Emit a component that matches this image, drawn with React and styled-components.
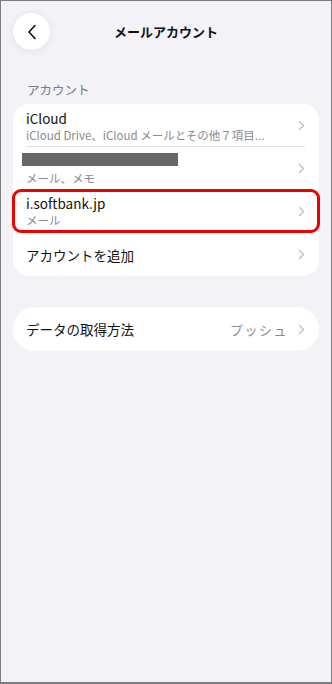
import React from "react";
import styled, { createGlobalStyle } from "styled-components";

const Global = createGlobalStyle`
  html, body { margin: 0; padding: 0; }
  body { font-family: "Noto Sans CJK JP", "Noto Sans", sans-serif; }
`;

const Frame = styled.div`
  box-sizing: border-box;
  width: 332px;
  height: 684px;
  background: #f2f2f7;
  border: 1px solid #7d7d7d;
  border-bottom-width: 2px;
  display: flex;
  flex-direction: column;
  padding: 12px 12px 0;
`;

const Header = styled.div`
  display: grid;
  grid-template-columns: 37px 1fr 37px;
  align-items: center;
  height: 37px;
`;

const BackButton = styled.div`
  width: 37px;
  height: 37px;
  border-radius: 50%;
  background: #ffffff;
  box-shadow: 0 1px 8px rgba(0, 0, 0, 0.08);
  display: flex;
  align-items: center;
  justify-content: center;
`;

const Title = styled.div`
  text-align: center;
  font-size: 13px;
  font-weight: 700;
  color: #111;
`;

const SectionLabel = styled.div`
  margin: 31px 0 0 14px;
  font-size: 12.5px;
  color: #7b7b80;
  height: 18px;
  line-height: 18px;
`;

const Card = styled.div`
  margin-top: ${(p) => p.$mt}px;
  background: #fff;
  border-radius: ${(p) => p.$radius}px;
  display: flex;
  flex-direction: column;
`;

const Row = styled.div`
  position: relative;
  display: flex;
  align-items: center;
  height: ${(p) => p.$h}px;
  padding: 0 14px 0 13px;
  ${(p) =>
    p.$divider &&
    `&::before { content: ""; position: absolute; left: 13px; right: 14px; bottom: 0; height: 1px; background: #e2e2e6; }`}
  ${(p) =>
    p.$highlight &&
    `&::after { content: ""; position: absolute; left: -1px; right: -1px; top: 0; bottom: 0; border: 3px solid #ee0000; border-radius: 9px; }`}
`;

const Texts = styled.div`
  flex: 1;
  display: flex;
  flex-direction: column;
  min-width: 0;
`;

const Primary = styled.div`
  font-size: 13.5px;
  color: #111;
  line-height: 18px;
`;

const Secondary = styled.div`
  font-size: 11.5px;
  color: #8a8a8e;
  line-height: 16px;
  white-space: nowrap;
`;

const Redacted = styled.div`
  width: 156px;
  height: 13px;
  background: #676767;
  margin: 2px 0 4px -4px;
`;

const Value = styled.div`
  font-size: 13px;
  color: #8a8a8e;
  margin-right: 10px;
  letter-spacing: 1.5px;
`;

const Chevron = () => (
  <svg width="7" height="11" viewBox="0 0 7 11">
    <path d="M1.5 1.5l4 4-4 4" fill="none" stroke="#c4c4c8" strokeWidth="1.5" strokeLinecap="round" strokeLinejoin="round" />
  </svg>
);

export default function App() {
  return (
    <>
      <Global />
      <Frame>
        <Header>
          <BackButton>
            <svg width="10" height="16" viewBox="0 0 10 16">
              <path d="M8 1.5L2 8l6 6.5" fill="none" stroke="#111" strokeWidth="1.6" strokeLinecap="round" strokeLinejoin="round" />
            </svg>
          </BackButton>
          <Title>メールアカウント</Title>
          <div />
        </Header>
        <SectionLabel>アカウント</SectionLabel>
        <Card $mt={5} $radius={16}>
          <Row $h={43} $divider>
            <Texts>
              <Primary>iCloud</Primary>
              <Secondary>iCloud Drive、iCloud メールとその他７項目...</Secondary>
            </Texts>
            <Chevron />
          </Row>
          <Row $h={42}>
            <Texts>
              <Redacted />
              <Secondary>メール、メモ</Secondary>
            </Texts>
            <Chevron />
          </Row>
          <Row $h={44} $highlight>
            <Texts>
              <Primary>i.softbank.jp</Primary>
              <Secondary>メール</Secondary>
            </Texts>
            <Chevron />
          </Row>
          <Row $h={43}>
            <Texts>
              <Primary>アカウントを追加</Primary>
            </Texts>
            <Chevron />
          </Row>
        </Card>
        <Card $mt={31} $radius={22}>
          <Row $h={44}>
            <Texts>
              <Primary>データの取得方法</Primary>
            </Texts>
            <Value>プッシュ</Value>
            <Chevron />
          </Row>
        </Card>
      </Frame>
    </>
  );
}
